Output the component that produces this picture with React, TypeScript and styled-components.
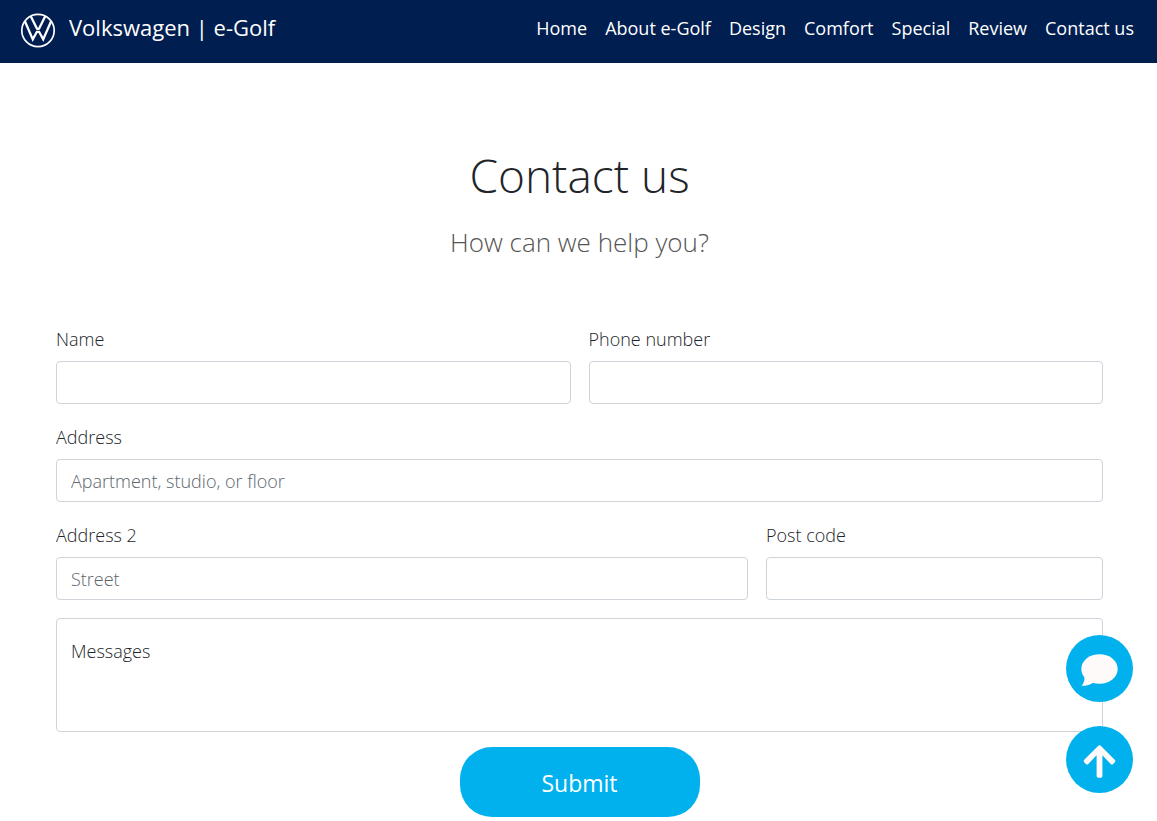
import React from "react";
import styled, { createGlobalStyle } from "styled-components";
import { FaArrowUp } from "react-icons/fa";

const GlobalStyle = createGlobalStyle`
  *, *::before, *::after { box-sizing: border-box; }
  body {
    margin: 0;
    background: #fff;
    color: #212529;
    font-family: "Open Sans", "Noto Sans", sans-serif;
    font-size: 18px;
    font-weight: 300;
    line-height: 28px;
  }
`;

const Header = styled.header`
  display: flex;
  align-items: flex-start;
  justify-content: space-between;
  min-height: 63px;
  padding: 13px 23px 14px 20px;
  background: #001e50;
`;

const Brand = styled.a`
  display: flex;
  align-items: flex-start;
  gap: 13px;
  color: #fff;
  font-size: 22px;
  font-weight: 400;
  line-height: 28px;
  text-decoration: none;
  white-space: nowrap;
`;

const Nav = styled.nav`
  display: flex;
  gap: 18px;
  line-height: 30px;
`;

const NavLink = styled.a`
  color: #fff;
  font-size: 18px;
  font-weight: 400;
  text-decoration: none;
  white-space: nowrap;
`;

const Main = styled.main`
  padding: 79px 54px 4px 56px;
`;

const Heading = styled.div`
  display: flex;
  flex-direction: column;
  align-items: center;
  gap: 16px;
  margin-bottom: 64px;
  text-align: center;
`;

const Title = styled.h1`
  margin: 0;
  font-size: 46px;
  font-weight: 300;
  line-height: 66px;
`;

const Subtitle = styled.p`
  margin: 0;
  color: #555;
  font-size: 26px;
  line-height: 36px;
`;

const Form = styled.form`
  display: grid;
  grid-template-columns: repeat(12, 1fr);
  column-gap: 18px;
  row-gap: 18px;
`;

const Field = styled.div<{ $span: number }>`
  grid-column: span ${(p) => p.$span};
  display: flex;
  flex-direction: column;
  gap: 6px;
`;

const Label = styled.label`
  line-height: 31px;
`;

const Input = styled.input`
  width: 100%;
  height: 43px;
  padding: 0 14px;
  border: 1px solid #ced4da;
  border-radius: 4px;
  background: #fff;
  color: #212529;
  font: inherit;

  &::placeholder {
    color: #5c656d;
    opacity: 1;
  }
`;

const TextArea = styled.textarea`
  display: block;
  grid-column: 1 / -1;
  width: 100%;
  height: 114px;
  padding: 18px 14px;
  border: 1px solid #ced4da;
  border-radius: 4px;
  background: #fff;
  color: #212529;
  font: inherit;
  resize: none;

  &::placeholder {
    color: #212529;
    opacity: 1;
  }
`;

const Submit = styled.button`
  grid-column: 1 / -1;
  justify-self: center;
  width: 240px;
  height: 70px;
  margin-top: -3px;
  padding: 2px 0 0;
  border: 0;
  border-radius: 32px;
  background: #00b1ee;
  color: #fff;
  font: inherit;
  font-size: 23px;
  font-weight: 400;
`;

const Floating = styled.div`
  position: fixed;
  right: 24px;
  bottom: 28px;
  display: flex;
  flex-direction: column;
  gap: 24px;
`;

const RoundButton = styled.button`
  display: flex;
  align-items: center;
  justify-content: center;
  width: 67px;
  height: 67px;
  padding: 4px 0 0;
  border: 0;
  border-radius: 50%;
  background: #00b1ee;
  color: #fffafa;
`;

const Logo = () => (
  <svg width="36" height="36" viewBox="0 0 36 36" fill="none" stroke="#fff" aria-hidden="true">
    <circle cx="18" cy="17.5" r="16.2" strokeWidth="1.7" />
    <path d="M10.8 3.2 L17 15.8 H19 L25.2 3.2" strokeWidth="2.3" strokeLinejoin="bevel" />
    <path d="M4.8 8 L12.8 26.4 L16.9 18.8 H19.1 L23.2 26.4 L31.2 8" strokeWidth="2.3" />
  </svg>
);

const ChatBubble = () => (
  <svg width="37" height="33" viewBox="0 0 37 33" fill="currentColor" aria-hidden="true">
    <ellipse cx="18.5" cy="15" rx="18.2" ry="14.8" />
    <path d="M0.5 31.8 Q4.4 27.4 3.2 22 L12.5 28.4 Q7.5 32 0.5 31.8 Z" />
  </svg>
);

const links = ["Home", "About e-Golf", "Design", "Comfort", "Special", "Review", "Contact us"];

const fields = [
  { id: "name", label: "Name", span: 6 },
  { id: "phone", label: "Phone number", span: 6 },
  { id: "address", label: "Address", span: 12, placeholder: "Apartment, studio, or floor" },
  { id: "address2", label: "Address 2", span: 8, placeholder: "Street" },
  { id: "postcode", label: "Post code", span: 4 },
];

export default function App() {
  return (
    <>
      <GlobalStyle />
      <Header>
        <Brand href="#">
          <Logo />
          Volkswagen | e-Golf
        </Brand>
        <Nav>
          {links.map((text) => (
            <NavLink key={text} href="#">
              {text}
            </NavLink>
          ))}
        </Nav>
      </Header>
      <Main>
        <Heading>
          <Title>Contact us</Title>
          <Subtitle>How can we help you?</Subtitle>
        </Heading>
        <Form onSubmit={(e) => e.preventDefault()}>
          {fields.map((f) => (
            <Field key={f.id} $span={f.span}>
              <Label htmlFor={f.id}>{f.label}</Label>
              <Input id={f.id} type="text" placeholder={f.placeholder} />
            </Field>
          ))}
          <TextArea aria-label="Messages" placeholder="Messages" />
          <Submit type="submit">Submit</Submit>
        </Form>
      </Main>
      <Floating>
        <RoundButton type="button" aria-label="Chat">
          <ChatBubble />
        </RoundButton>
        <RoundButton type="button" aria-label="Back to top">
          <FaArrowUp size={37} />
        </RoundButton>
      </Floating>
    </>
  );
}
